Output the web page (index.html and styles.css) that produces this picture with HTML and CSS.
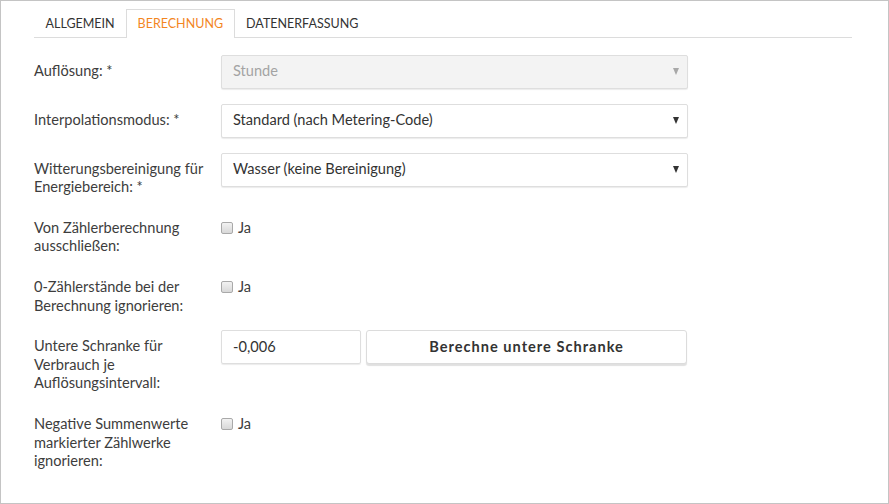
FILE: index.html
```html
<!DOCTYPE html>
<html lang="de">
<head>
<meta charset="utf-8">
<link rel="stylesheet" href="styles.css">
</head>
<body>
<div class="frame">
  <ul class="tabs">
    <li class="tab">ALLGEMEIN</li>
    <li class="tab active">BERECHNUNG</li>
    <li class="tab">DATENERFASSUNG</li>
  </ul>
  <form class="form">
    <div class="row">
      <label class="lbl">Auflösung: *</label>
      <div class="select disabled"><span>Stunde</span><span class="caret"></span></div>
    </div>
    <div class="row">
      <label class="lbl">Interpolationsmodus: *</label>
      <div class="select"><span>Standard (nach Metering-Code)</span><span class="caret"></span></div>
    </div>
    <div class="row">
      <label class="lbl">Witterungsbereinigung für Energiebereich: *</label>
      <div class="select"><span>Wasser (keine Bereinigung)</span><span class="caret"></span></div>
    </div>
    <div class="row">
      <label class="lbl">Von Zählerberechnung ausschließen:</label>
      <div class="check"><span class="box"></span><span>Ja</span></div>
    </div>
    <div class="row">
      <label class="lbl">0-Zählerstände bei der Berechnung ignorieren:</label>
      <div class="check"><span class="box"></span><span>Ja</span></div>
    </div>
    <div class="row">
      <label class="lbl">Untere Schranke für Verbrauch je Auflösungsintervall:</label>
      <div class="inline">
        <div class="input">-0,006</div>
        <div class="btn">Berechne untere Schranke</div>
      </div>
    </div>
    <div class="row">
      <label class="lbl">Negative Summenwerte markierter Zählwerke ignorieren:</label>
      <div class="check"><span class="box"></span><span>Ja</span></div>
    </div>
  </form>
</div>
</body>
</html>
```
FILE: styles.css
```css
* { box-sizing: border-box; }
html, body { margin: 0; padding: 0; background: #fff; }
body {
  font-family: "Lato", "Liberation Sans", sans-serif;
  font-size: 14.6px;
  line-height: 18.6px;
  color: #3d3d3d;
}
.frame {
  width: 889px;
  height: 504px;
  border: 1px solid #c4c4c4;
  padding: 8px 36px 0 33px;
}
.tabs {
  list-style: none;
  margin: 0 0 17px 0;
  padding: 0;
  display: flex;
  border-bottom: 1px solid #dcdcdc;
  font-size: 12.5px;
}
.tab {
  padding: 5px 10.5px 3px;
  border: 1px solid transparent;
  border-bottom: none;
  margin-bottom: -1px;
  color: #333;
}
.tab.active {
  color: #f3861f;
  border-color: #dcdcdc;
  background: #fff;
  padding-bottom: 4px;
}
.row {
  display: flex;
  margin-bottom: 15px;
}
.lbl {
  width: 187px;
  flex: none;
  padding-top: 7px;
  padding-right: 14px;
}
.select {
  width: 467px;
  height: 34px;
  border: 1px solid #dedede;
  box-shadow: 0 1px 1px rgba(0,0,0,0.08);
  border-radius: 2px;
  display: flex;
  align-items: center;
  justify-content: space-between;
  padding: 0 8px 0 11px;
  color: #333;
  background: #fff;
}
.select.disabled {
  background: #f3f3f3;
  color: #a3a3a3;
}
.caret {
  width: 0; height: 0;
  border-left: 3.5px solid transparent;
  border-right: 3.5px solid transparent;
  border-top: 7px solid #333;
}
.select.disabled .caret { border-top-color: #a8a8a8; }
.check {
  display: flex;
  align-items: center;
  gap: 5px;
  margin-top: 7px;
  height: 18.6px;
}
.box {
  width: 12px;
  height: 12px;
  border: 1px solid #a9a9a9;
  border-radius: 2px;
  background: linear-gradient(#f2f2f2, #d8d8d8);
}
.inline { display: flex; gap: 5px; }
.input {
  width: 140px;
  height: 34px;
  border: 1px solid #dedede;
  box-shadow: 0 1px 1px rgba(0,0,0,0.08);
  border-radius: 2px;
  padding: 0 11px;
  display: flex;
  align-items: center;
  color: #333;
}
.btn {
  width: 321px;
  height: 34px;
  border: 1px solid #dcdcdc;
  border-radius: 3px;
  box-shadow: 0 2px 1px #e0e0e0;
  display: flex;
  align-items: center;
  justify-content: center;
  font-weight: bold;
  letter-spacing: 1px;
  color: #333;
  background: #fff;
}
```
